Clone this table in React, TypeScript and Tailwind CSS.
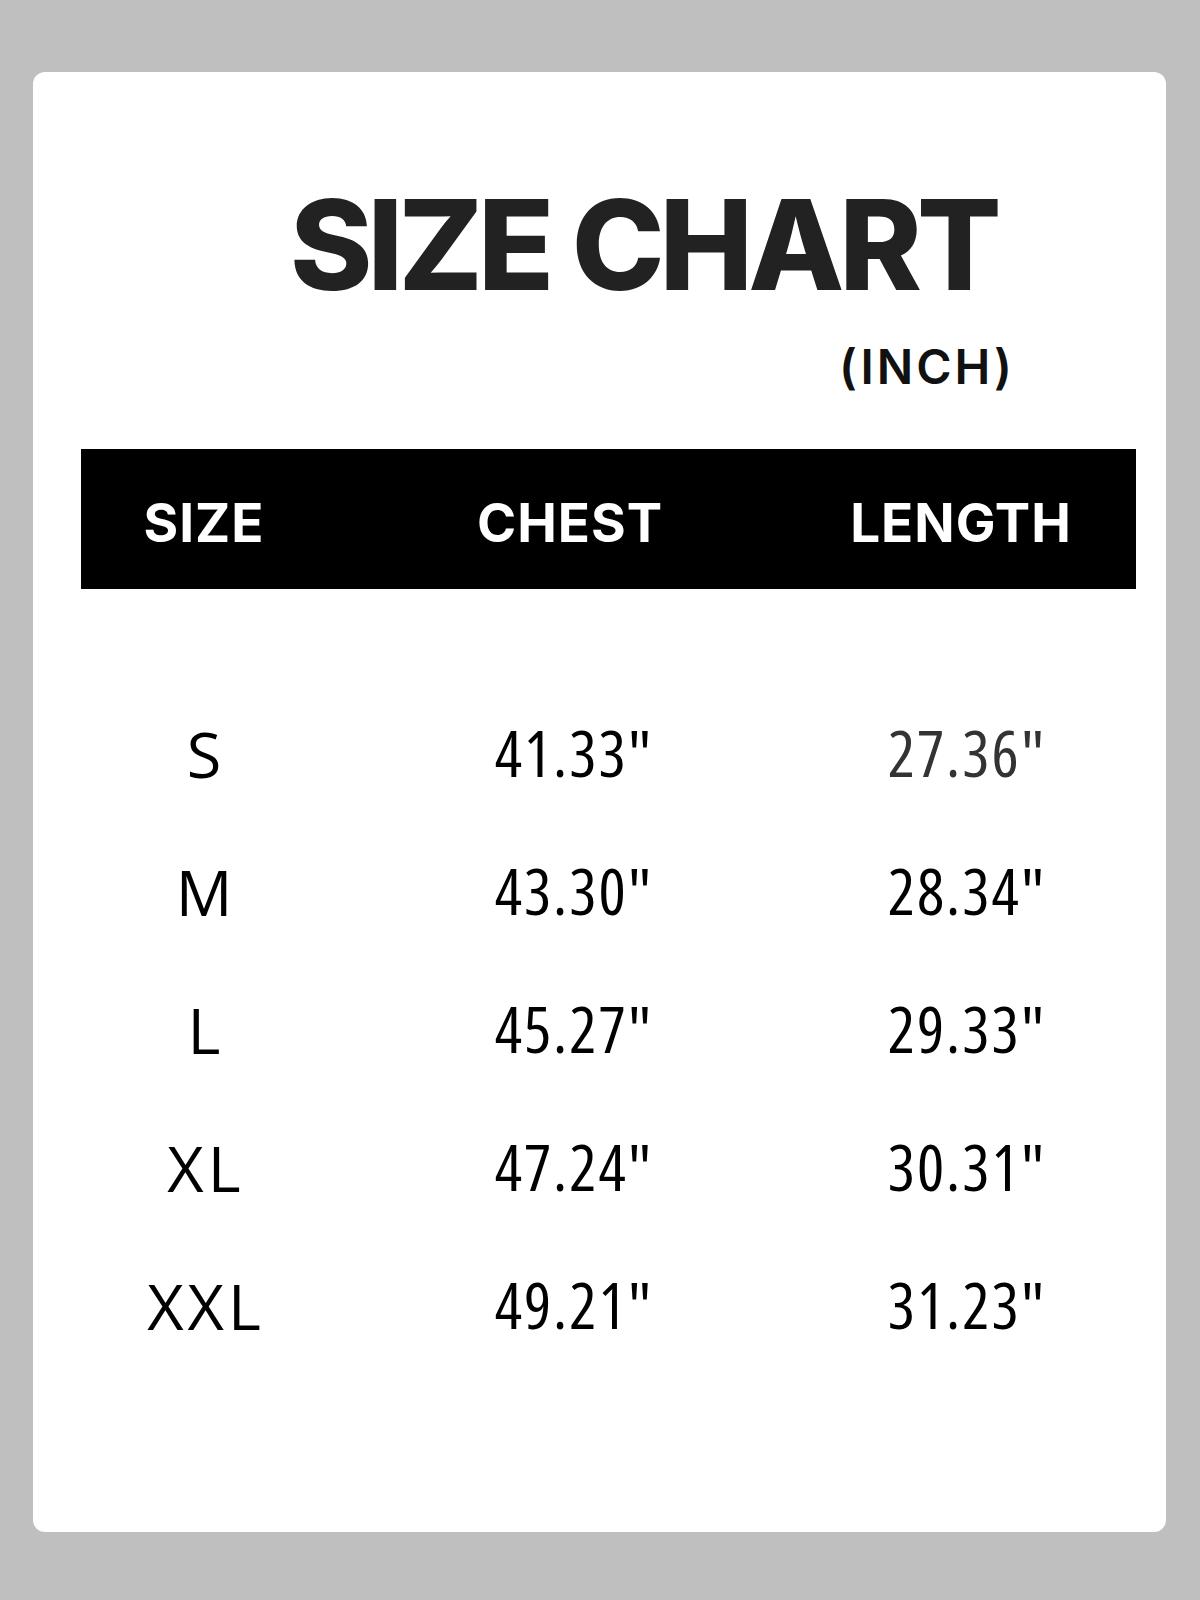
const rows = [
  { size: 'S', chest: '41.33"', length: '27.36"', lengthTone: 'text-[#333333]' },
  { size: 'M', chest: '43.30"', length: '28.34"', lengthTone: 'text-black' },
  { size: 'L', chest: '45.27"', length: '29.33"', lengthTone: 'text-black' },
  { size: 'XL', chest: '47.24"', length: '30.31"', lengthTone: 'text-black' },
  { size: 'XXL', chest: '49.21"', length: '31.23"', lengthTone: 'text-black' },
];

export default function App() {
  return (
    <div className="min-h-[1600px] w-[1200px] bg-[#bfbfbf] pt-[72px] pl-[33px]">
      <div className="w-[1133px] h-[1460px] bg-white rounded-[12px] pl-[48px] pr-[30px] pt-[110px]">
        {/* Title */}
        <h1 className="pl-[209px] font-['Inter',sans-serif] font-extrabold text-[125px] leading-none tracking-[-5px] text-[#222222]">
          SIZE CHART
        </h1>
        <p className="mt-[36px] pl-[758px] font-['Inter',sans-serif] font-semibold text-[48px] leading-none tracking-[3px] text-[#111111]">
          (INCH)
        </p>

        {/* Header bar */}
        <div className="mt-[58px] h-[140px] pt-[9px] bg-black grid grid-cols-[246px_492px_292px] items-center font-['Inter',sans-serif] font-bold text-[53px] tracking-[1px] text-white leading-none">
          <div className="text-center">SIZE</div>
          <div className="text-center pr-[6px]">CHEST</div>
          <div className="text-center pr-[8px]">LENGTH</div>
        </div>

        {/* Rows */}
        <div className="mt-[132px] flex flex-col gap-[75px] font-['Open_Sans',sans-serif] text-[63px] leading-none text-black">
          {rows.map((r) => (
            <div key={r.size} className="grid grid-cols-[246px_492px_292px] h-[63px] items-center">
              <div className="text-center tracking-[4px] pl-[4px]">{r.size}</div>
              <div className="text-center [font-stretch:75%] text-[64px] tracking-[2px] pl-[2px]">{r.chest}</div>
              <div className={`text-center [font-stretch:75%] text-[64px] tracking-[2px] pl-[4px] ${r.lengthTone}`}>{r.length}</div>
            </div>
          ))}
        </div>
      </div>
    </div>
  );
}
